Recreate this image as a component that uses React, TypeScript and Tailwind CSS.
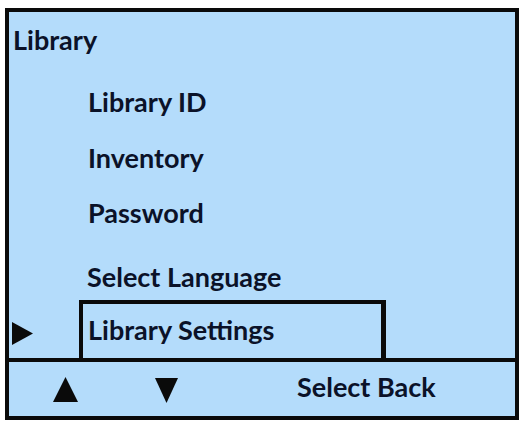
import React from "react";

export default function App() {
  const font = { fontFamily: "Lato, 'Open Sans', sans-serif" };
  return (
    <div className="w-[520px] h-[423px] bg-white pt-[8px] pl-[5px]" style={font}>
      <div className="w-[514px] h-[412px] border-4 border-[#0a0a0a] bg-[#b4dcfb] flex flex-col text-[#0b1228] font-bold text-[27px] leading-[32px]">
        <div className="h-[346px] flex flex-col">
          <div className="mt-[12px] pl-[4px]">Library</div>
          <div className="mt-[30px] pl-[79px]">Library ID</div>
          <div className="mt-[24px] pl-[79px]">Inventory</div>
          <div className="mt-[23px] pl-[79px]">Password</div>
          <div className="mt-[32px] pl-[78px]">Select Language</div>
          <div className="mt-[7px] flex items-start h-[58px]">
            <div className="w-[70px] pl-[3px] pt-[22px]">
              <svg width="21" height="23" viewBox="0 0 21 23">
                <polygon points="0,0 21,11.5 0,23" fill="#0a0a0a" />
              </svg>
            </div>
            <div className="w-[307px] h-[58px] border-t-4 border-l-4 border-r-[5px] border-[#0a0a0a] pl-[5px] pt-[10px]">
              Library Settings
            </div>
          </div>
        </div>
        <div className="h-[4px] bg-[#0a0a0a]" />
        <div className="h-[54px] flex items-start">
          <div className="ml-[44px] mt-[15px]">
            <svg width="25" height="25" viewBox="0 0 25 25">
              <polygon points="12.5,0 25,25 0,25" fill="#0a0a0a" />
            </svg>
          </div>
          <div className="ml-[77px] mt-[16px]">
            <svg width="23" height="25" viewBox="0 0 23 25">
              <polygon points="0,0 23,0 11.5,25" fill="#0a0a0a" />
            </svg>
          </div>
          <div className="ml-[119px] mt-[9px]">Select Back</div>
        </div>
      </div>
    </div>
  );
}
